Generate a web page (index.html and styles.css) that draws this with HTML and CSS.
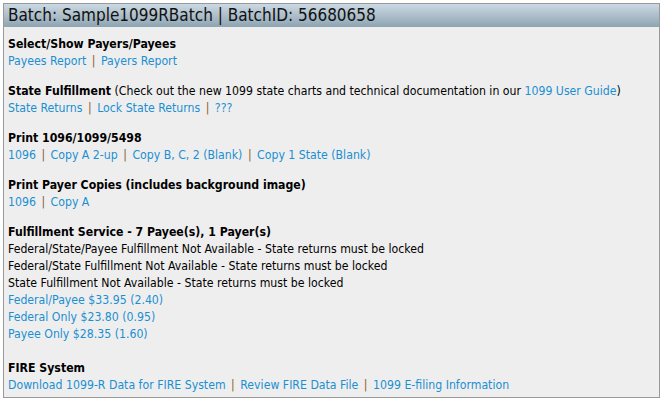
FILE: index.html
```html
<!DOCTYPE html>
<html>
<head>
    <meta name="viewport" content="width=device-width, initial-scale=1.0">
    <link rel="stylesheet" href="styles.css">
</head>
<body>

<div class="panel">
    <div class="panel-header">Batch: Sample1099RBatch | BatchID: 56680658</div>

    <div class="panel-body">
        <div class="section">
            <div class="section-title">Select/Show Payers/Payees</div>
            <div><a href="#">Payees Report</a> <span class="sep">|</span> <a href="#">Payers Report</a></div>
        </div>

        <div class="section">
            <div><span class="section-title">State Fulfillment</span> (Check out the new 1099 state charts and technical documentation in our <a href="#">1099 User Guide</a>)</div>
            <div><a href="#">State Returns</a> <span class="sep">|</span> <a href="#">Lock State Returns</a> <span class="sep">|</span> <a href="#">???</a></div>
        </div>

        <div class="section">
            <div class="section-title">Print 1096/1099/5498</div>
            <div><a href="#">1096</a> <span class="sep">|</span> <a href="#">Copy A 2-up</a> <span class="sep">|</span> <a href="#">Copy B, C, 2 (Blank)</a> <span class="sep">|</span> <a href="#">Copy 1 State (Blank)</a></div>
        </div>

        <div class="section">
            <div class="section-title">Print Payer Copies (includes background image)</div>
            <div><a href="#">1096</a> <span class="sep">|</span> <a href="#">Copy A</a></div>
        </div>

        <div class="section section-wide">
            <div class="section-title">Fulfillment Service - 7 Payee(s), 1 Payer(s)</div>
            <div>Federal/State/Payee Fulfillment Not Available - State returns must be locked</div>
            <div>Federal/State Fulfillment Not Available - State returns must be locked</div>
            <div>State Fulfillment Not Available - State returns must be locked</div>
            <div><a href="#">Federal/Payee $33.95 (2.40)</a></div>
            <div><a href="#">Federal Only $23.80 (0.95)</a></div>
            <div><a href="#">Payee Only $28.35 (1.60)</a></div>
        </div>

        <div class="section last">
            <div class="section-title">FIRE System</div>
            <div><a href="#">Download 1099-R Data for FIRE System</a> <span class="sep">|</span> <a href="#">Review FIRE Data File</a> <span class="sep">|</span> <a href="#">1099 E-filing Information</a></div>
        </div>
    </div>
</div>

</body>
</html>
```

FILE: styles.css
```css
body {
    margin: 0;
    padding: 3px;
    background-color: #fff;
    font-family: "DejaVu Sans Condensed", "DejaVu Sans", sans-serif;
    font-size: 12.2px;
    color: #000;
}

.panel {
    width: 655px;
    border: 1px solid #999;
    background-color: #eee;
}

.panel-header {
    height: 23px;
    line-height: 23px;
    padding: 0 4px;
    font-size: 17px;
    color: #111;
    background: linear-gradient(to bottom, #cbd9e3, #8ea4b2);
}

.panel-body {
    padding: 9px 4px 3px 4px;
    line-height: 17px;
}

.section {
    margin-bottom: 13px;
}

.section-wide {
    margin-bottom: 17px;
}

.section.last {
    margin-bottom: 0;
}

.section-title {
    font-weight: bold;
}

a {
    color: #1b8fd2;
    text-decoration: none;
}

.sep {
    padding: 0 2px;
    color: #8b5a2b;
}
```
